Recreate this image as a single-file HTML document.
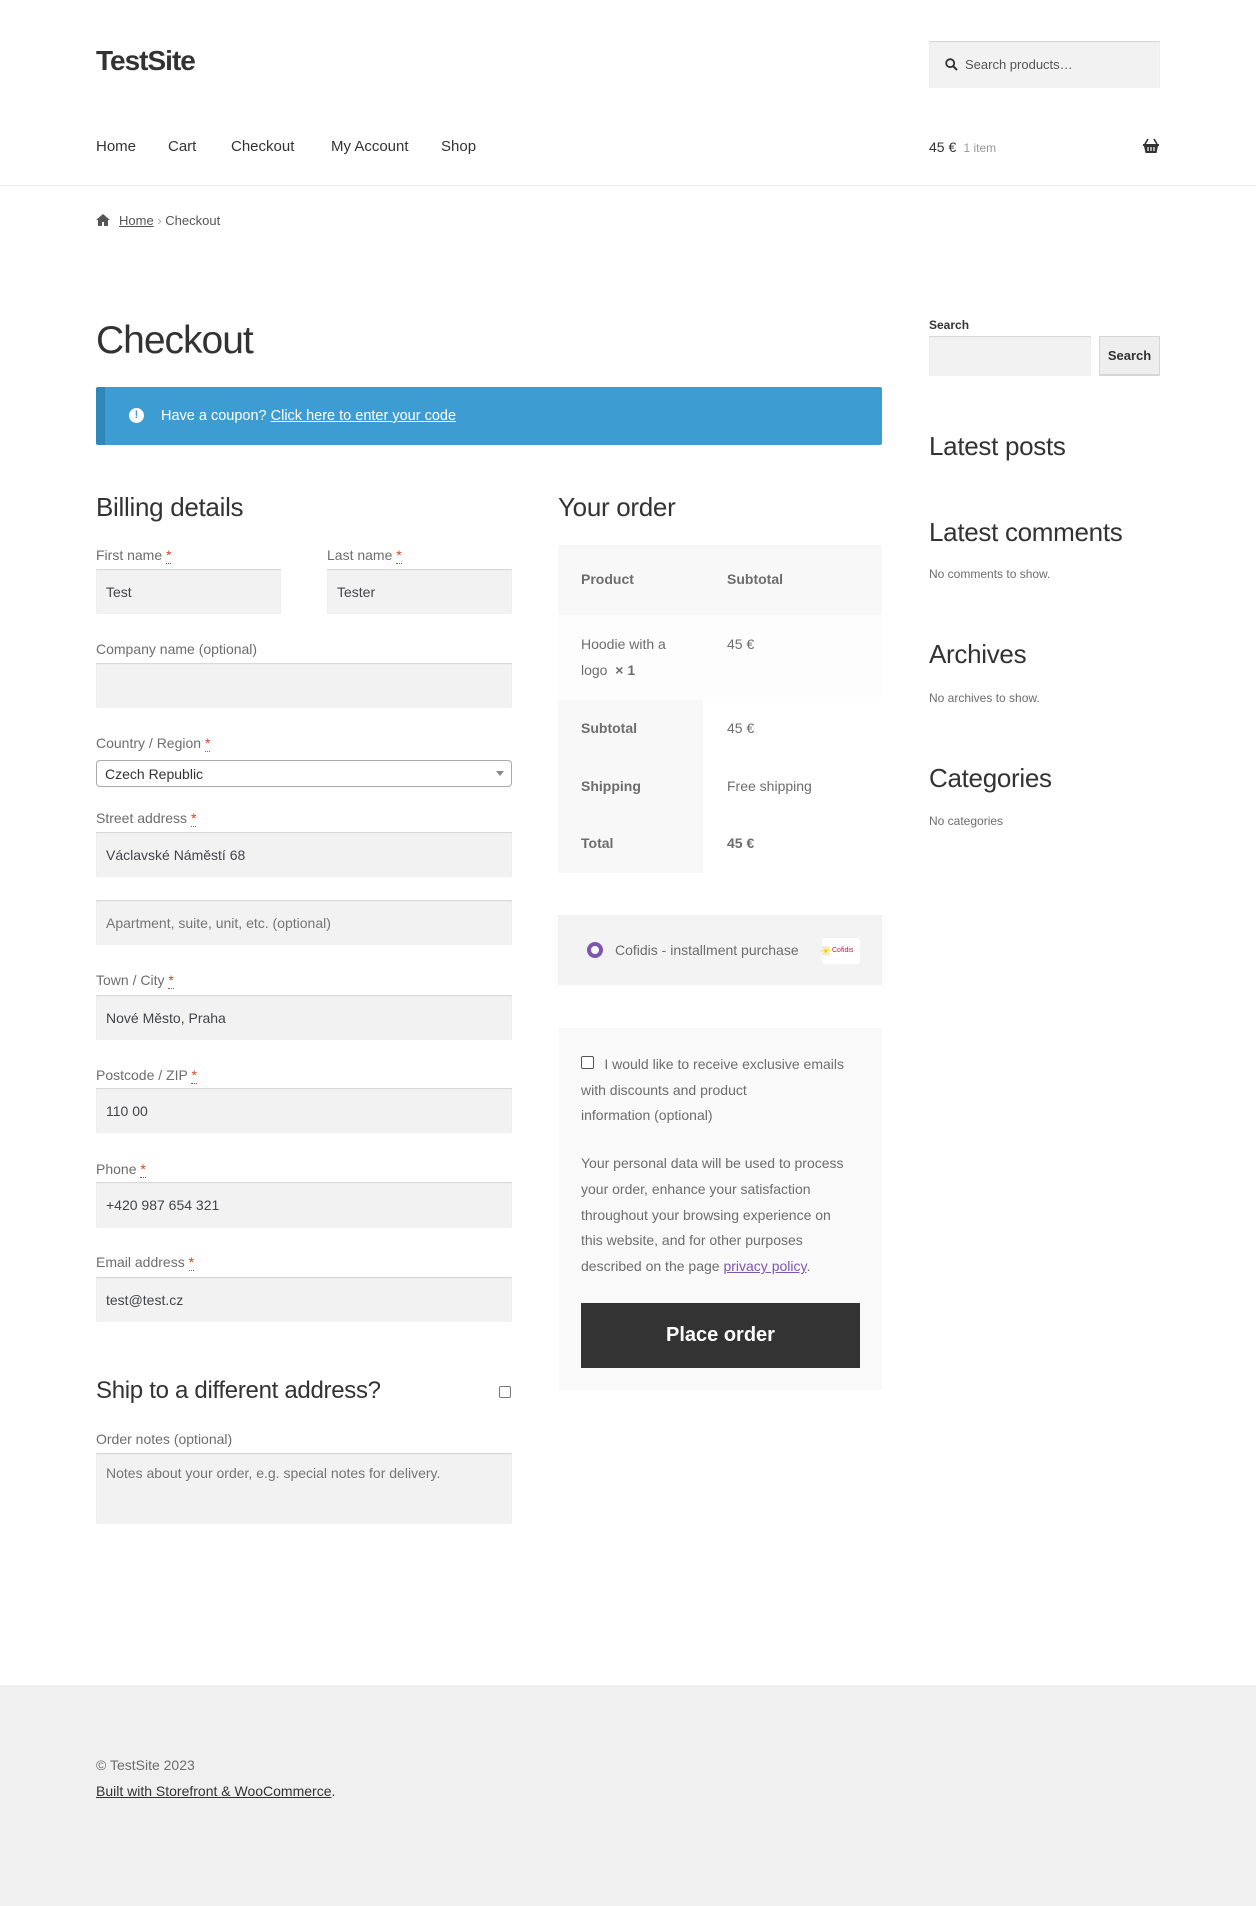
<!DOCTYPE html>
<html><head><meta charset="utf-8"><style>
*{box-sizing:border-box;margin:0;padding:0}
body{width:1256px;height:1906px;position:relative;background:#fff;font-family:"Liberation Sans",sans-serif;color:#6d6d6d;font-size:14px;overflow:hidden}
.a{position:absolute;white-space:nowrap}
.h{color:#333}
.lbl{position:absolute;left:96px;font-size:14px;color:#6d6d6d}
.lbl i{color:#e2401c;font-style:normal;border-bottom:1px dotted #e2401c}
.in{position:absolute;background:#f2f2f2;box-shadow:inset 0 1px 1px rgba(0,0,0,.125);font-size:14px;color:#43454b;padding-left:10px;display:flex;align-items:center}
.ph{color:#757575}
.sb{font-size:26px;font-weight:300;color:#333;letter-spacing:-.3px}
</style></head><body>
<div class="a h" style="left:96px;top:45px;font-size:28px;font-weight:bold;letter-spacing:-1px">TestSite</div>
<div class="a" style="left:929px;top:41px;width:231px;height:47px;background:#f2f2f2;box-shadow:inset 0 1px 1px rgba(0,0,0,.125)"></div>
<svg class="a" style="left:945px;top:58px" width="13" height="13" viewBox="0 0 13 13"><circle cx="5.2" cy="5.2" r="4" fill="none" stroke="#333" stroke-width="1.8"/><path d="M8 8l4 4" stroke="#333" stroke-width="2"/></svg>
<div class="a" style="left:965px;top:57px;font-size:13px;color:#555">Search products…</div>
<div class="a h" style="top:138px;left:96px;font-size:15px">Home</div>
<div class="a h" style="top:138px;left:168px;font-size:15px">Cart</div>
<div class="a h" style="top:138px;left:231px;font-size:15px">Checkout</div>
<div class="a h" style="top:138px;left:331px;font-size:15px">My Account</div>
<div class="a h" style="top:138px;left:441px;font-size:15px">Shop</div>
<div class="a h" style="top:139px;left:929px;font-size:14px">45 € <span style="font-size:12px;color:#999">&nbsp;1 item</span></div>
<svg class="a" style="left:1142px;top:138px" width="18" height="16" viewBox="0 0 18 16"><path d="M6 1L3 6M12 1l3 5" stroke="#333" stroke-width="1.6" fill="none"/><path d="M1 6h16v2h-1l-1.5 7h-11L2 8H1z" fill="#333"/><path d="M6 9v4M9 9v4M12 9v4" stroke="#fff" stroke-width="1.2"/></svg>
<div class="a" style="left:0;top:185px;width:1256px;height:1px;background:#ececec"></div>
<svg class="a" style="left:96px;top:214px" width="14" height="12" viewBox="0 0 14 12"><path d="M7 0L0 6h2v6h4V8h2v4h4V6h2z" fill="#555"/></svg>
<div class="a" style="left:119px;top:213px;font-size:13px"><span style="text-decoration:underline;color:#555">Home</span> <span style="color:#aaa">›</span> <span style="color:#555">Checkout</span></div>
<div class="a h" style="left:96px;top:319px;font-size:39px;font-weight:300;letter-spacing:-1px">Checkout</div>
<div class="a" style="left:96px;top:387px;width:786px;height:58px;background:#3d9cd2;border-left:9px solid #2f86b8;border-radius:2px"></div>
<div class="a" style="left:129px;top:408px;width:15px;height:15px;border-radius:50%;background:#fff;color:#3d9cd2;font-size:11px;font-weight:bold;text-align:center;line-height:15px">!</div>
<div class="a" style="left:161px;top:408px;font-size:14.5px;color:#fff">Have a coupon? <u>Click here to enter your code</u></div>
<div class="a sb" style="left:96px;top:492px">Billing details</div>
<div class="lbl" style="top:547px">First name <i>*</i></div>
<div class="lbl" style="top:547px;left:327px">Last name <i>*</i></div>
<div class="in" style="left:96px;top:569px;width:185px;height:45px">Test</div>
<div class="in" style="left:327px;top:569px;width:185px;height:45px">Tester</div>
<div class="lbl" style="top:641px">Company name (optional)</div>
<div class="in" style="left:96px;top:663px;width:416px;height:45px"></div>
<div class="lbl" style="top:735px">Country / Region <i>*</i></div>
<div class="a" style="left:96px;top:760px;width:416px;height:27px;border:1px solid #aaa;border-radius:4px;font-size:14px;color:#333;padding:5px 0 0 8px">Czech Republic</div>
<div class="a" style="left:496px;top:771px;border:4px solid transparent;border-top:5px solid #888"></div>
<div class="lbl" style="top:810px">Street address <i>*</i></div>
<div class="in" style="left:96px;top:832px;width:416px;height:45px">Václavské Náměstí 68</div>
<div class="in ph" style="left:96px;top:900px;width:416px;height:45px">Apartment, suite, unit, etc. (optional)</div>
<div class="lbl" style="top:972px">Town / City <i>*</i></div>
<div class="in" style="left:96px;top:995px;width:416px;height:45px">Nové Město, Praha</div>
<div class="lbl" style="top:1067px">Postcode / ZIP <i>*</i></div>
<div class="in" style="left:96px;top:1088px;width:416px;height:45px">110 00</div>
<div class="lbl" style="top:1161px">Phone <i>*</i></div>
<div class="in" style="left:96px;top:1182px;width:416px;height:46px">+420 987 654 321</div>
<div class="lbl" style="top:1254px">Email address <i>*</i></div>
<div class="in" style="left:96px;top:1277px;width:416px;height:45px">test@test.cz</div>
<div class="a sb" style="left:96px;top:1377px;font-size:24px">Ship to a different address?</div>
<div class="a" style="left:499px;top:1386px;width:12px;height:12px;border:1px solid #777;border-radius:2px"></div>
<div class="lbl" style="top:1431px">Order notes (optional)</div>
<div class="in ph" style="left:96px;top:1453px;width:416px;height:71px;align-items:flex-start;padding-top:12px">Notes about your order, e.g. special notes for delivery.</div>

<div class="a sb" style="left:558px;top:492px">Your order</div>
<div class="a" style="left:558px;top:545px;width:324px;height:70px;background:#f8f8f8"></div>
<div class="a" style="left:558px;top:615px;width:324px;height:85px;background:#fdfdfd"></div>
<div class="a" style="left:558px;top:700px;width:145px;height:173px;background:#f8f8f8"></div>
<div class="a" style="left:581px;top:571px;font-weight:bold;font-size:14px">Product</div>
<div class="a" style="left:727px;top:571px;font-weight:bold;font-size:14px">Subtotal</div>
<div class="a" style="left:581px;top:631px;font-size:14px;line-height:26px">Hoodie with a<br>logo&nbsp; <b>× 1</b></div>
<div class="a" style="left:727px;top:636px">45 €</div>
<div class="a" style="left:581px;top:720px;font-weight:bold">Subtotal</div>
<div class="a" style="left:727px;top:720px">45 €</div>
<div class="a" style="left:581px;top:778px;font-weight:bold">Shipping</div>
<div class="a" style="left:727px;top:778px">Free shipping</div>
<div class="a" style="left:581px;top:835px;font-weight:bold">Total</div>
<div class="a" style="left:727px;top:835px;font-weight:bold">45 €</div>
<div class="a" style="left:558px;top:915px;width:324px;height:70px;background:#f3f3f3"></div>
<div class="a" style="left:587px;top:942px;width:16px;height:16px;border-radius:50%;border:4.5px solid #7f54b3;background:#fff"></div>
<div class="a" style="left:615px;top:942px;font-size:14px">Cofidis - installment purchase</div>
<div class="a" style="left:822px;top:938px;width:38px;height:26px;background:#fff;border-radius:3px;font-size:7px;color:#d0103a;padding:9px 0 0 10px">Cofidis</div>
<div class="a" style="left:820px;top:943px;color:#f5c400;font-size:14px">✳</div>
<div class="a" style="left:559px;top:1028px;width:323px;height:362px;background:#f9f9f9"></div>
<div class="a" style="left:581px;top:1056px;width:13px;height:13px;border:1px solid #555;border-radius:2px;background:#fff"></div>
<div class="a" style="left:581px;top:1052px;font-size:14px;line-height:25.5px">&nbsp;&nbsp;&nbsp;&nbsp;&nbsp; I would like to receive exclusive emails<br>with discounts and product<br>information (optional)</div>
<div class="a" style="left:581px;top:1151px;font-size:14px;line-height:25.8px">Your personal data will be used to process<br>your order, enhance your satisfaction<br>throughout your browsing experience on<br>this website, and for other purposes<br>described on the page <u style="color:#7f54b3">privacy policy</u>.</div>
<div class="a" style="left:581px;top:1303px;width:279px;height:65px;background:#333;color:#fff;font-weight:bold;font-size:20px;text-align:center;line-height:65px">Place order</div>

<div class="a h" style="left:929px;top:318px;font-size:12px;font-weight:bold">Search</div>
<div class="in" style="left:929px;top:336px;width:162px;height:40px"></div>
<div class="a h" style="left:1099px;top:336px;width:61px;height:40px;background:#eee;border:1px solid #d6d6d6;border-bottom-width:2px;font-size:13px;font-weight:bold;text-align:center;line-height:37px">Search</div>
<div class="a sb" style="left:929px;top:431px">Latest posts</div>
<div class="a sb" style="left:929px;top:517px">Latest comments</div>
<div class="a" style="left:929px;top:567px;font-size:12px">No comments to show.</div>
<div class="a sb" style="left:929px;top:639px">Archives</div>
<div class="a" style="left:929px;top:691px;font-size:12px">No archives to show.</div>
<div class="a sb" style="left:929px;top:763px">Categories</div>
<div class="a" style="left:929px;top:814px;font-size:12px">No categories</div>

<div class="a" style="left:0;top:1685px;width:1256px;height:221px;background:#f0f0f0"></div>
<div class="a" style="left:96px;top:1757px;font-size:14px">© TestSite 2023</div>
<div class="a h" style="left:96px;top:1783px;font-size:14px"><u>Built with Storefront &amp; WooCommerce</u>.</div>
</body></html>
